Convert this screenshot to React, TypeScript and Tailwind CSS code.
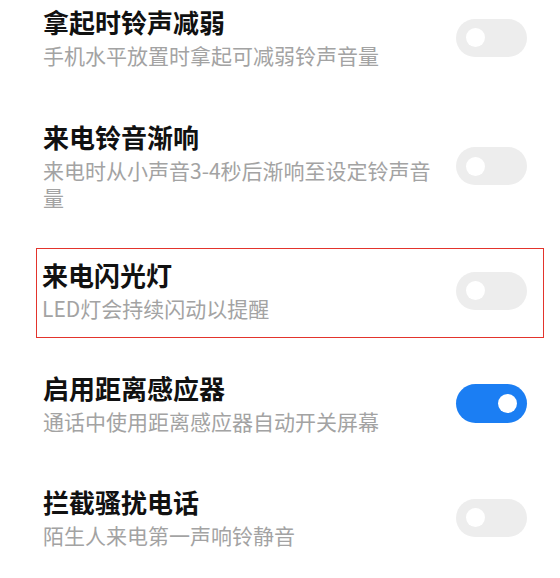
import React from "react";

function Toggle({ on }: { on?: boolean }) {
  return on ? (
    <div className="flex h-[39px] w-[71px] shrink-0 items-center justify-end rounded-full bg-[#1b7ef3] pr-[10px]">
      <div className="h-[19px] w-[19px] rounded-full bg-white" />
    </div>
  ) : (
    <div className="flex h-[38px] w-[71px] shrink-0 items-center rounded-full bg-[#ededed] pl-[10px]">
      <div className="h-[19px] w-[19px] rounded-full bg-white" />
    </div>
  );
}

function Row({ title, sub, on }: { title: string; sub: string; on?: boolean }) {
  return (
    <div className="flex items-center justify-between">
      <div className="w-[404px]">
        <div className="text-[26px] font-semibold leading-[32px] text-[#111111]">{title}</div>
        <div className="mt-[4px] text-[21px] leading-[27px] text-[#a3a3a3]">{sub}</div>
      </div>
      <Toggle on={on} />
    </div>
  );
}

export default function App() {
  return (
    <div
      className="h-[578px] w-[560px] overflow-hidden bg-white pt-[6px]"
      style={{ fontFamily: '"Noto Sans CJK SC", "Noto Sans", sans-serif' }}
    >
      <div className="pl-[43px] pr-[33px]">
        <Row title="拿起时铃声减弱" sub="手机水平放置时拿起可减弱铃声音量" />
      </div>
      <div className="mt-[52px] pl-[43px] pr-[33px]">
        <Row title="来电铃音渐响" sub="来电时从小声音3-4秒后渐响至设定铃声音量" />
      </div>
      <div className="ml-[36px] mr-[16px] mt-[37px] border-[1.5px] border-[#e3342c] pb-[15px] pl-[5px] pr-[16px] pt-[10px]">
        <Row title="来电闪光灯" sub="LED灯会持续闪动以提醒" />
      </div>
      <div className="mt-[34px] pl-[43px] pr-[33px]">
        <Row title="启用距离感应器" sub="通话中使用距离感应器自动开关屏幕" on />
      </div>
      <div className="mt-[51px] pl-[43px] pr-[33px]">
        <Row title="拦截骚扰电话" sub="陌生人来电第一声响铃静音" />
      </div>
    </div>
  );
}
